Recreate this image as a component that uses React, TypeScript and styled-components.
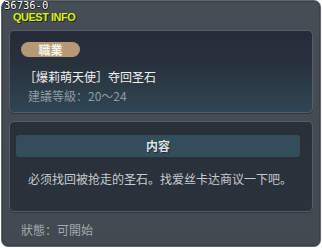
import React from 'react';
import styled, { createGlobalStyle } from 'styled-components';

const GlobalStyle = createGlobalStyle`
  html, body {
    margin: 0;
    padding: 0;
    background: #ffffff;
  }
  body {
    font-family: "Noto Sans CJK SC", "Noto Sans", sans-serif;
  }
`;

const App = () => {
  return (
    <>
      <GlobalStyle />
      <Window>
        <QuestId>36736-0</QuestId>
        <Title>QUEST INFO</Title>

        <InfoPanel>
          <Badge>職業</Badge>
          <QuestName>［爆莉萌天使］夺回圣石</QuestName>
          <Level>建議等級：20～24</Level>
        </InfoPanel>

        <ContentPanel>
          <ContentHeader>内容</ContentHeader>
          <ContentText>必须找回被抢走的圣石。找爱丝卡达商议一下吧。</ContentText>
        </ContentPanel>

        <Status>狀態：可開始</Status>
      </Window>
    </>
  );
};

const Window = styled.div`
  position: relative;
  box-sizing: border-box;
  width: 320px;
  height: 247px;
  margin-left: 1px;
  padding: 29px 7px 0 7px;
  background: linear-gradient(180deg, #464d55 0%, #424950 100%);
  border: 1px solid #5f666e;
  border-radius: 7px;
  box-shadow: inset 0 0 0 1px #3a4047;
  display: flex;
  flex-direction: column;
`;

const QuestId = styled.div`
  position: absolute;
  top: -1px;
  left: 2px;
  font-family: "DejaVu Sans Mono", monospace;
  font-size: 10.5px;
  line-height: 11px;
  color: #ffffff;
  text-shadow: 1px 0 0 #15181b, 0 1px 0 #15181b, -1px 0 0 #15181b;
`;

const Title = styled.div`
  position: absolute;
  top: 11px;
  left: 11px;
  font-family: "Liberation Sans", Arial, sans-serif;
  font-weight: bold;
  font-size: 11px;
  line-height: 11px;
  letter-spacing: -0.5px;
  color: #d6ee26;
  text-shadow: 1px 1px 0 #1f240a, 1px 0 0 #2c3210;
`;

const Panel = styled.div`
  box-sizing: border-box;
  width: 304px;
  border: 1px solid #555d66;
  border-radius: 5px;
  box-shadow: 0 1px 0 #30363d;
`;

const InfoPanel = styled(Panel)`
  height: 83px;
  padding: 11px 0 0 11px;
  background: linear-gradient(180deg, #262c37 0%, #28313c 40%, #2f4652 100%);
`;

const Badge = styled.div`
  width: 59px;
  height: 15px;
  border-radius: 8px;
  background: #b69a75;
  color: #f6f1ea;
  font-size: 12px;
  font-weight: bold;
  line-height: 15px;
  text-align: center;
`;

const QuestName = styled.div`
  margin: 12px 0 0 3px;
  font-size: 12px;
  line-height: 16px;
  color: #f2f2f2;
`;

const Level = styled.div`
  margin: 3px 0 0 7px;
  font-size: 12px;
  line-height: 16px;
  color: #8c9ba5;
`;

const ContentPanel = styled(Panel)`
  height: 91px;
  margin-top: 8px;
  padding: 13px 12px 0 6px;
  background: linear-gradient(180deg, #2a303a 0%, #2c323c 100%);
`;

const ContentHeader = styled.div`
  height: 22px;
  border-radius: 3px;
  background: #334d5a;
  color: #dde2e5;
  font-size: 12px;
  font-weight: bold;
  line-height: 22px;
  text-align: center;
  text-shadow: 1px 1px 0 #1c2a30;
`;

const ContentText = styled.div`
  margin: 14px 0 0 12px;
  font-size: 12px;
  line-height: 16px;
  color: #c6cbd1;
  white-space: nowrap;
`;

const Status = styled.div`
  margin: 10px 0 0 12px;
  font-size: 12px;
  line-height: 16px;
  color: #a3aab1;
`;

export default App;
